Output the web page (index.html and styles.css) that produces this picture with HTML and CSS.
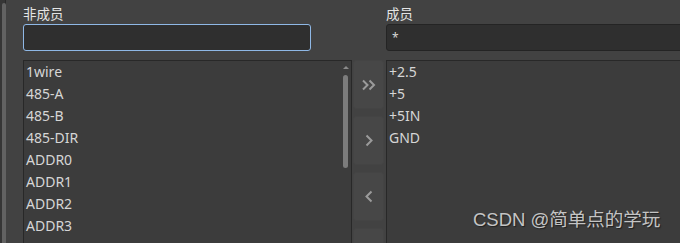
FILE: index.html
```html
<!DOCTYPE html>
<html lang="zh-CN">

<head>
    <meta charset="UTF-8">
    <title>成员</title>
    <link rel="stylesheet" href="styles.css">
</head>

<body>

    <!-- Левая полоса прокрутки окна -->
    <div class="edge">
        <div class="edge-bar"></div>
    </div>

    <div class="panel">
        <!-- Не участники -->
        <div class="column left">
            <label class="label">非成员</label>
            <input class="filter focused" type="text" value="">
            <div class="list">
                <div class="items">
                    <div class="item">1wire</div>
                    <div class="item">485-A</div>
                    <div class="item">485-B</div>
                    <div class="item">485-DIR</div>
                    <div class="item">ADDR0</div>
                    <div class="item">ADDR1</div>
                    <div class="item">ADDR2</div>
                    <div class="item">ADDR3</div>
                </div>
                <div class="scroll">
                    <div class="scroll-arrow"></div>
                    <div class="scroll-thumb"></div>
                </div>
            </div>
        </div>

        <!-- Кнопки переноса -->
        <div class="buttons">
            <button class="move">
                <svg width="16" height="12" viewBox="0 0 16 12"><path d="M2 1.5l4.5 4.5-4.5 4.5M8.5 1.5l4.5 4.5-4.5 4.5" fill="none" stroke="#9b9b9b" stroke-width="2"/></svg>
            </button>
            <button class="move">
                <svg width="10" height="13" viewBox="0 0 10 13"><path d="M2.5 1.5l5 5-5 5" fill="none" stroke="#9b9b9b" stroke-width="2"/></svg>
            </button>
            <button class="move">
                <svg width="10" height="13" viewBox="0 0 10 13"><path d="M7.5 1.5l-5 5 5 5" fill="none" stroke="#9b9b9b" stroke-width="2"/></svg>
            </button>
            <button class="move"></button>
        </div>

        <!-- Участники -->
        <div class="column right">
            <label class="label">成员</label>
            <input class="filter" type="text" value="*">
            <div class="list">
                <div class="items">
                    <div class="item">+2.5</div>
                    <div class="item">+5</div>
                    <div class="item">+5IN</div>
                    <div class="item">GND</div>
                </div>
            </div>
        </div>
    </div>

    <div class="watermark">CSDN @简单点的学玩</div>

</body>

</html>
```

FILE: styles.css
```css
/* Основные стили */
body {
    margin: 0;
    height: 243px;
    overflow: hidden;
    display: flex;
    background: #424242;
    font-family: 'Noto Sans', 'Noto Sans CJK SC', sans-serif;
    color: #d6d6d6;
}

/* Полоса слева */
.edge {
    width: 6px;
    background: #363636;
    border-right: 1px solid #2a2a2a;
    padding: 3px 0 0 2px;
    box-sizing: border-box;
    flex-shrink: 0;
}

.edge-bar {
    width: 4px;
    height: 100%;
    background: #626262;
    border-radius: 2px 2px 0 0;
}

.panel {
    display: flex;
    padding: 6px 0 0 17px;
    flex: 1;
}

.column {
    display: flex;
    flex-direction: column;
}

.column > * {
    flex-shrink: 0;
}

.left {
    width: 329px;
}

.right {
    width: 320px;
    flex-shrink: 0;
}

.label {
    font-size: 13.5px;
    line-height: 16px;
    color: #e4e4e4;
}

.filter {
    margin-top: 2px;
    height: 27px;
    box-sizing: border-box;
    background: #2f2f2f;
    border: 1px solid #242424;
    border-radius: 3px;
    padding: 0 5px;
    color: #d6d6d6;
    font-family: inherit;
    font-size: 12px;
    outline: none;
}

.left .filter {
    width: 288px;
}

.focused {
    border-color: #8fb8e6;
}

/* Списки */
.list {
    margin-top: 9px;
    height: 200px;
    display: flex;
    background: #3c3c3c;
    border: 1px solid #282828;
    box-sizing: border-box;
}

.items {
    flex: 1;
    padding-left: 2px;
}

.item {
    height: 22px;
    line-height: 22px;
    font-size: 14px;
}

.scroll {
    width: 11px;
    display: flex;
    flex-direction: column;
    align-items: center;
    padding-top: 5px;
}

.scroll-arrow {
    width: 0;
    height: 0;
    border-left: 3px solid transparent;
    border-right: 3px solid transparent;
    border-bottom: 3px solid #8a8a8a;
}

.scroll-thumb {
    margin-top: 6px;
    width: 5px;
    height: 93px;
    background: #7c7c7c;
    border-radius: 3px;
}

/* Кнопки */
.buttons {
    width: 34px;
    padding: 54px 2px 0 1px;
    box-sizing: border-box;
    display: flex;
    flex-direction: column;
    gap: 7px;
    flex-shrink: 0;
}

.move {
    height: 49px;
    flex-shrink: 0;
    background: #474747;
    border: 1px solid #444444;
    border-radius: 3px;
    padding: 0;
    display: flex;
    align-items: center;
    justify-content: center;
}

/* Водяной знак */
.watermark {
    position: absolute;
    left: 473px;
    top: 205px;
    font-family: 'Liberation Sans', 'Noto Sans CJK SC', sans-serif;
    font-size: 18.5px;
    color: #c4c4c4;
    text-shadow: 1px 1px 1px #202020;
}
```
